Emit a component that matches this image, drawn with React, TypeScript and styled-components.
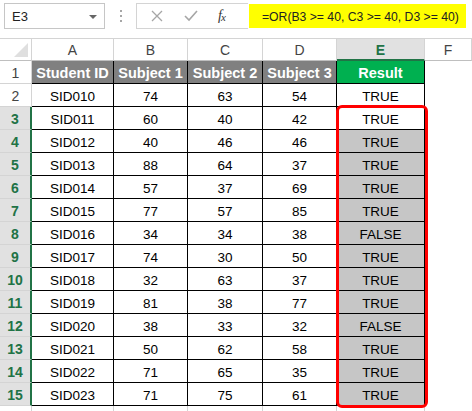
import React from "react";
import styled, { createGlobalStyle, css } from "styled-components";

const COLS = [32, 82, 74, 75, 74, 88];
const ROW_H = 23;
const HEAD_H = 23;

const rows = [
  ["SID010", 74, 63, 54, "TRUE"],
  ["SID011", 60, 40, 42, "TRUE"],
  ["SID012", 40, 46, 46, "TRUE"],
  ["SID013", 88, 64, 37, "TRUE"],
  ["SID014", 57, 37, 69, "TRUE"],
  ["SID015", 77, 57, 85, "TRUE"],
  ["SID016", 34, 34, 38, "FALSE"],
  ["SID017", 74, 30, 50, "TRUE"],
  ["SID018", 32, 63, 37, "TRUE"],
  ["SID019", 81, 38, 77, "TRUE"],
  ["SID020", 38, 33, 32, "FALSE"],
  ["SID021", 50, 62, 58, "TRUE"],
  ["SID022", 71, 65, 35, "TRUE"],
  ["SID023", 71, 75, 61, "TRUE"],
];

const GlobalStyle = createGlobalStyle`
  html, body {
    margin: 0;
    padding: 0;
    background: #fff;
  }
  body {
    font-family: "Liberation Sans", Arial, sans-serif;
    color: #000;
  }
`;

const Page = styled.div`
  width: 472px;
  height: 411px;
  overflow: hidden;
  background: #fff;
`;

const FormulaBar = styled.div`
  height: 38px;
  display: flex;
  align-items: flex-start;
  padding-top: 3px;
  box-sizing: border-box;
`;

const NameBox = styled.div`
  margin-left: 4px;
  width: 101px;
  height: 26px;
  box-sizing: border-box;
  border: 1px solid #c6c6c6;
  display: flex;
  align-items: center;
  justify-content: space-between;
  padding: 1px 7px 0 7px;
  font-size: 13px;
  color: #222;
`;

const DropArrow = styled.span`
  width: 0;
  height: 0;
  border-left: 4px solid transparent;
  border-right: 4px solid transparent;
  border-top: 4px solid #666;
`;

const Dots = styled.div`
  width: 31px;
  height: 26px;
  display: flex;
  flex-direction: column;
  align-items: center;
  justify-content: center;
  gap: 3px;
  span {
    width: 2px;
    height: 2px;
    background: #a6a6a6;
  }
`;

const ActionBox = styled.div`
  width: 112px;
  height: 26px;
  box-sizing: border-box;
  border: 1px solid #d4d4d4;
  border-right: none;
  display: flex;
  align-items: center;
  padding-left: 14px;
  gap: 21px;
`;

const Fx = styled.span`
  font-family: "Liberation Serif", "Times New Roman", serif;
  font-style: italic;
  font-size: 14px;
  color: #333;
  margin-left: -1px;
  letter-spacing: -1px;
  sub {
    font-size: 11px;
    vertical-align: -1px;
  }
`;

const FormulaInput = styled.div`
  margin-top: 1px;
  margin-left: 1px;
  width: 217px;
  height: 24px;
  background: #ffff00;
  display: flex;
  align-items: center;
  padding-left: 13px;
  padding-top: 1px;
  box-sizing: border-box;
  font-size: 12.2px;
  color: #222;
  white-space: nowrap;
`;

const Sheet = styled.div`
  position: relative;
  display: grid;
  grid-template-columns: ${COLS.map((c) => `${c}px`).join(" ")} 1fr;
  grid-template-rows: ${HEAD_H}px repeat(16, ${ROW_H}px);
`;

const ColHead = styled.div<{ $active?: boolean; $corner?: boolean }>`
  position: relative;
  box-sizing: border-box;
  border-top: 1px solid #d4d4d4;
  border-right: 1px solid #d4d4d4;
  border-bottom: 1px solid #bfbfbf;
  display: flex;
  align-items: center;
  justify-content: center;
  font-size: 14px;
  color: #444;
  background: #fff;
  ${(p) =>
    p.$active &&
    css`
      background: #e1e1e1;
      color: #217346;
      font-weight: bold;
      border-bottom: 2px solid #217346;
      padding-top: 1px;
    `}
  ${(p) =>
    p.$corner &&
    css`
      &::after {
        content: "";
        position: absolute;
        right: 3px;
        bottom: 3px;
        width: 0;
        height: 0;
        border-left: 14px solid transparent;
        border-bottom: 14px solid #dfdfdf;
      }
    `}
`;

const RowHead = styled.div<{ $active?: boolean }>`
  box-sizing: border-box;
  border-bottom: 1px solid #d4d4d4;
  border-right: 1px solid #d4d4d4;
  display: flex;
  align-items: center;
  justify-content: center;
  padding-top: 1px;
  font-size: 14px;
  color: #444;
  background: #fff;
  ${(p) =>
    p.$active &&
    css`
      background: #e1e1e1;
      color: #217346;
      font-weight: bold;
      border-right: 2px solid #217346;
    `}
`;

const Cell = styled.div<{ $tone?: "head" | "green" | "shade" | "plain" }>`
  box-sizing: border-box;
  border-right: 1px solid #000;
  border-bottom: 1px solid #000;
  display: flex;
  align-items: center;
  justify-content: center;
  padding-top: 2px;
  font-size: 13.5px;
  white-space: nowrap;
  overflow: hidden;
  background: ${(p) =>
    p.$tone === "head"
      ? "#808080"
      : p.$tone === "green"
      ? "#00b050"
      : p.$tone === "shade"
      ? "#c6c6c6"
      : "#fff"};
  ${(p) =>
    (p.$tone === "head" || p.$tone === "green") &&
    css`
      color: #fff;
      font-weight: bold;
      font-size: 14.5px;
      padding-top: 1px;
    `}
`;

const EmptyCell = styled.div<{ $lines?: boolean }>`
  box-sizing: border-box;
  border-right: ${(p) => (p.$lines ? "1px solid #d4d4d4" : "none")};
`;

const Highlight = styled.div`
  position: absolute;
  left: ${COLS.slice(0, 5).reduce((a, b) => a + b, 0) - 1}px;
  top: ${HEAD_H + ROW_H * 2 - 2}px;
  width: 92px;
  height: 303px;
  box-sizing: border-box;
  border: 3px solid #ff0000;
  border-radius: 6px;
  pointer-events: none;
`;

const CrossIcon = () => (
  <svg width="12" height="12" viewBox="0 0 12 12">
    <path d="M1 1 L11 11 M11 1 L1 11" stroke="#a6a6a6" strokeWidth="1.3" fill="none" />
  </svg>
);

const CheckIcon = () => (
  <svg width="14" height="12" viewBox="0 0 14 12">
    <path d="M1 6 L5 10 L13 1" stroke="#a6a6a6" strokeWidth="1.6" fill="none" />
  </svg>
);

const letters = ["A", "B", "C", "D", "E", "F"];
const heads = ["Student ID", "Subject 1", "Subject 2", "Subject 3"];

export default function App() {
  return (
    <Page>
      <GlobalStyle />
      <FormulaBar>
        <NameBox>
          E3
          <DropArrow />
        </NameBox>
        <Dots>
          <span />
          <span />
          <span />
        </Dots>
        <ActionBox>
          <CrossIcon />
          <CheckIcon />
          <Fx>
            f<sub>x</sub>
          </Fx>
        </ActionBox>
        <FormulaInput>=OR(B3 &gt;= 40, C3 &gt;= 40, D3 &gt;= 40)</FormulaInput>
      </FormulaBar>

      <Sheet>
        <ColHead $corner />
        {letters.map((l) => (
          <ColHead key={l} $active={l === "E"}>
            {l}
          </ColHead>
        ))}

        <RowHead>1</RowHead>
        {heads.map((h) => (
          <Cell key={h} $tone="head">
            {h}
          </Cell>
        ))}
        <Cell $tone="green">Result</Cell>
        <EmptyCell />

        {rows.map((r, i) => {
          const n = i + 2;
          return (
            <React.Fragment key={n}>
              <RowHead $active={n >= 3}>{n}</RowHead>
              <Cell>{r[0]}</Cell>
              <Cell>{r[1]}</Cell>
              <Cell>{r[2]}</Cell>
              <Cell>{r[3]}</Cell>
              <Cell $tone={n >= 4 ? "shade" : "plain"}>{r[4]}</Cell>
              <EmptyCell />
            </React.Fragment>
          );
        })}

        {/* row 16 is only a sliver at the bottom edge */}
        <RowHead />
        {[0, 1, 2, 3, 4].map((k) => (
          <EmptyCell key={k} $lines />
        ))}
        <EmptyCell />

        <Highlight />
      </Sheet>
    </Page>
  );
}
